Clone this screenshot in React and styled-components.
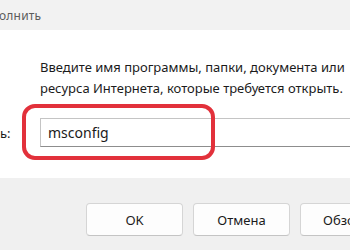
import React from 'react';
import styled, { createGlobalStyle } from 'styled-components';

const GlobalStyle = createGlobalStyle`
  html, body {
    margin: 0;
    padding: 0;
    background: #ffffff;
  }
  body {
    font-family: "Noto Sans", "Open Sans", sans-serif;
  }
`;

const Dialog = styled.div`
  position: relative;
  width: 350px;
  height: 250px;
  overflow: hidden;
  display: flex;
  flex-direction: column;
  background: #ffffff;
`;

const TitleBar = styled.div`
  height: 30px;
  flex: none;
  display: flex;
  align-items: center;
  background: #f2f2f2;
  color: #5c5c5c;
  font-size: 12px;
  span {
    margin-left: -1px;
    letter-spacing: 0.2px;
  }
`;

const Body = styled.div`
  flex: none;
  height: 148px;
  background: #ffffff;
  display: flex;
  flex-direction: column;
`;

const Prompt = styled.p`
  margin: 27px 0 0 40px;
  font-size: 13px;
  line-height: 21px;
  color: #1b1b1b;
  white-space: nowrap;
`;

const InputRow = styled.div`
  display: flex;
  align-items: center;
  margin-top: 18px;
  height: 30px;
`;

const Label = styled.label`
  width: 40px;
  flex: none;
  font-size: 13px;
  color: #1b1b1b;
  padding-top: 2px;
`;

const Field = styled.div`
  flex: none;
  width: 340px;
  height: 29px;
  box-sizing: border-box;
  border: 1px solid #c4c4c4;
  border-bottom: 1px solid #8d8d8d;
  background: #ffffff;
  display: flex;
  align-items: center;
  padding-left: 7px;
  font-size: 14px;
  color: #1a1a1a;
`;

const Highlight = styled.div`
  position: absolute;
  left: 22px;
  top: 104px;
  width: 193px;
  height: 56px;
  box-sizing: border-box;
  border: 4.5px solid #e2313b;
  border-radius: 13px;
  pointer-events: none;
`;

const Footer = styled.div`
  flex: 1;
  background: #f0f0f0;
  display: flex;
  align-items: flex-start;
  gap: 10px;
  padding: 25px 0 0 86px;
`;

const Button = styled.button`
  flex: none;
  width: 97px;
  height: 33px;
  box-sizing: border-box;
  border: 1px solid #d5d5d5;
  border-bottom-color: #c4c4c4;
  border-radius: 4px;
  background: #fdfdfd;
  font-family: inherit;
  font-size: 13px;
  color: #1b1b1b;
  text-align: ${p => (p.$cut ? 'left' : 'center')};
  padding: ${p => (p.$cut ? '0 0 0 22px' : '0')};
  white-space: nowrap;
  overflow: hidden;
`;

export default function App() {
  return (
    <>
      <GlobalStyle />
      <Dialog>
        <TitleBar>
          <span>олнить</span>
        </TitleBar>
        <Body>
          <Prompt>
            Введите имя программы, папки, документа или
            <br />
            ресурса Интернета, которые требуется открыть.
          </Prompt>
          <InputRow>
            <Label>ь:</Label>
            <Field>msconfig</Field>
          </InputRow>
        </Body>
        <Footer>
          <Button>OK</Button>
          <Button>Отмена</Button>
          <Button $cut>Обзор...</Button>
        </Footer>
        <Highlight />
      </Dialog>
    </>
  );
}
